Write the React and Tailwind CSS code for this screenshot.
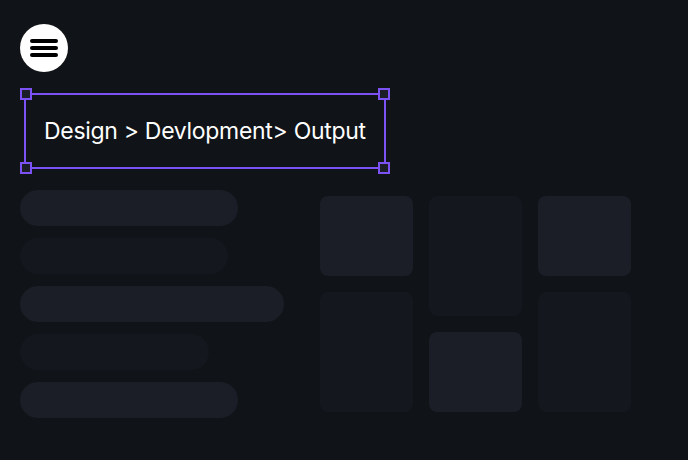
export default function App() {
  const bars = [
    { w: 'w-[218px]', c: 'bg-[#1b1e26]' },
    { w: 'w-[208px]', c: 'bg-[#14171e]' },
    { w: 'w-[264px]', c: 'bg-[#1b1e26]' },
    { w: 'w-[189px]', c: 'bg-[#14171e]' },
    { w: 'w-[218px]', c: 'bg-[#1b1e26]' },
  ];

  const columns = [
    [{ h: 'h-[80px]', c: 'bg-[#1b1e26]' }, { h: 'h-[120px]', c: 'bg-[#14171e]' }],
    [{ h: 'h-[120px]', c: 'bg-[#14171e]' }, { h: 'h-[80px]', c: 'bg-[#1b1e26]' }],
    [{ h: 'h-[80px]', c: 'bg-[#1b1e26]' }, { h: 'h-[120px]', c: 'bg-[#14171e]' }],
  ];

  return (
    <div className="w-[688px] h-[460px] overflow-hidden bg-[#101317] px-5 pt-6 font-['Inter',sans-serif]">
      {/* Menu button */}
      <button className="w-12 h-12 rounded-full bg-white flex flex-col items-center justify-center gap-[3px]">
        <span className="block w-7 h-1 rounded-full bg-black" />
        <span className="block w-7 h-1 rounded-full bg-black" />
        <span className="block w-7 h-1 rounded-full bg-black" />
      </button>

      {/* Selected text frame */}
      <div className="relative mt-[21px] ml-1 w-[362px] h-[76px] border-2 border-[#7c52f5] flex items-center pl-[18px]">
        <span className="text-white text-[23px] leading-none tracking-[-0.3px]">Design &gt; Devlopment&gt; Output</span>
        <span className="absolute -left-[6px] -top-[7px] w-3 h-3 border-2 border-[#7c52f5] bg-[#1b1e26]" />
        <span className="absolute -right-[6px] -top-[7px] w-3 h-3 border-2 border-[#7c52f5] bg-[#1b1e26]" />
        <span className="absolute -left-[6px] -bottom-[7px] w-3 h-3 border-2 border-[#7c52f5] bg-[#1b1e26]" />
        <span className="absolute -right-[6px] -bottom-[7px] w-3 h-3 border-2 border-[#7c52f5] bg-[#1b1e26]" />
      </div>

      <div className="flex mt-[21px] gap-9">
        {/* Skeleton bars */}
        <div className="w-[264px] flex flex-col gap-3">
          {bars.map((b, i) => (
            <div key={i} className={`${b.w} h-9 rounded-full ${b.c}`} />
          ))}
        </div>

        {/* Skeleton grid */}
        <div className="mt-[6px] flex gap-4">
          {columns.map((col, i) => (
            <div key={i} className="w-[93px] flex flex-col gap-4">
              {col.map((cell, j) => (
                <div key={j} className={`${cell.h} rounded-lg ${cell.c}`} />
              ))}
            </div>
          ))}
        </div>
      </div>
    </div>
  );
}
